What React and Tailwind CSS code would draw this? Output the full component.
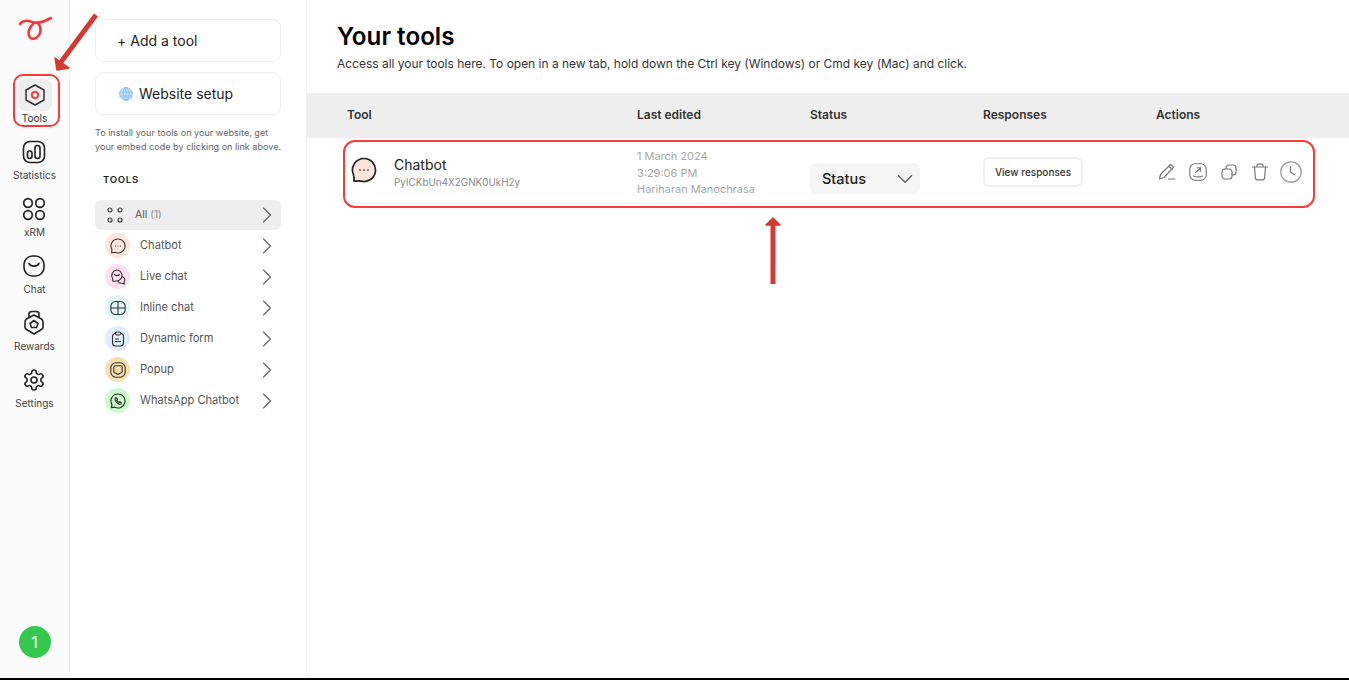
import { ChevronRight, ChevronDown } from 'lucide-react'

const Logo = () => (
  <svg width="36" height="28" viewBox="0 0 36 28" fill="none" stroke="#f5393b" strokeWidth="2.6" strokeLinecap="round">
    <path d="M3 9 C6 5 10 5 15 7 C22 9 28 6 34 3" />
    <path d="M17 8 C12 12 10 19 13 22.5 C17 26 24 21 23.5 14 C23 10 22 8.5 20 8" />
  </svg>
)

const HexIcon = () => (
  <svg width="22" height="24" viewBox="0 0 22 24" fill="none">
    <path d="M11 2 L20 7 V17 L11 22 L2 17 V7 Z" stroke="#333" strokeWidth="1.5" strokeLinejoin="round" />
    <circle cx="11" cy="12" r="3.2" stroke="#f5393b" strokeWidth="1.8" />
  </svg>
)

const StatsIcon = () => (
  <svg width="24" height="24" viewBox="0 0 24 24" fill="none" stroke="#222" strokeWidth="1.6">
    <rect x="1.5" y="1.5" width="21" height="21" rx="6.5" />
    <rect x="5.5" y="11" width="4.5" height="7.5" rx="2.2" />
    <rect x="13" y="5.5" width="5" height="13" rx="2.5" />
  </svg>
)

const GridIcon = () => (
  <svg width="24" height="24" viewBox="0 0 24 24" fill="none" stroke="#222" strokeWidth="1.7">
    <circle cx="6" cy="6" r="4.3" />
    <circle cx="18" cy="6" r="4.3" />
    <circle cx="6" cy="18" r="4.3" />
    <circle cx="18" cy="18" r="4.3" />
  </svg>
)

const ChatIcon = () => (
  <svg width="24" height="24" viewBox="0 0 24 24" fill="none" stroke="#222" strokeWidth="1.6" strokeLinecap="round">
    <rect x="2" y="2" width="20" height="20" rx="8.5" />
    <path d="M7 9.5 C9 13 15 13 17 9.5" />
  </svg>
)

const RewardsIcon = () => (
  <svg width="22" height="26" viewBox="0 0 22 26" fill="none" stroke="#222" strokeWidth="1.6" strokeLinejoin="round">
    <path d="M6 7 V4 C6 2 7.5 1.5 9 1.5 H13 C14.5 1.5 16 2 16 4 V7" />
    <path d="M11 5 L18.5 9 C20 10 20 11 20 12.5 V17 C20 18 19.5 19 18.5 19.5 L11 24 L3.5 19.5 C2.5 19 2 18 2 17 V12.5 C2 11 2 10 3.5 9 Z" />
    <path d="M11 10.5 L15 13.5 L13.5 17.5 H8.5 L7 13.5 Z" />
  </svg>
)

const GearIcon = () => (
  <svg width="24" height="24" viewBox="0 0 24 24" fill="none" stroke="#222" strokeWidth="1.6" strokeLinecap="round" strokeLinejoin="round">
    <path d="M12.22 2h-.44a2 2 0 0 0-2 2v.18a2 2 0 0 1-1 1.73l-.43.25a2 2 0 0 1-2 0l-.15-.08a2 2 0 0 0-2.73.73l-.22.38a2 2 0 0 0 .73 2.73l.15.1a2 2 0 0 1 1 1.72v.51a2 2 0 0 1-1 1.74l-.15.09a2 2 0 0 0-.73 2.73l.22.38a2 2 0 0 0 2.73.73l.15-.08a2 2 0 0 1 2 0l.43.25a2 2 0 0 1 1 1.73V20a2 2 0 0 0 2 2h.44a2 2 0 0 0 2-2v-.18a2 2 0 0 1 1-1.73l.43-.25a2 2 0 0 1 2 0l.15.08a2 2 0 0 0 2.73-.73l.22-.39a2 2 0 0 0-.73-2.73l-.15-.08a2 2 0 0 1-1-1.74v-.5a2 2 0 0 1 1-1.74l.15-.09a2 2 0 0 0 .73-2.73l-.22-.38a2 2 0 0 0-2.73-.73l-.15.08a2 2 0 0 1-2 0l-.43-.25a2 2 0 0 1-1-1.73V4a2 2 0 0 0-2-2z" />
    <circle cx="12" cy="12" r="3" />
  </svg>
)

const railItems = [
  { label: 'Statistics', icon: <StatsIcon /> },
  { label: 'xRM', icon: <GridIcon /> },
  { label: 'Chat', icon: <ChatIcon /> },
  { label: 'Rewards', icon: <RewardsIcon /> },
  { label: 'Settings', icon: <GearIcon /> },
]

const BubbleIcon = () => (
  <svg width="16" height="16" viewBox="0 0 16 16" fill="none" stroke="#333" strokeWidth="1.1" strokeLinecap="round">
    <path d="M8 1 a7 7 0 1 1 -3 13.3 L1.6 14.8 L1.9 11.4 A7 7 0 0 1 8 1 Z" strokeLinejoin="round" />
    <path d="M5.5 8 h.01 M8 8 h.01 M10.5 8 h.01" />
  </svg>
)

const LiveIcon = () => (
  <svg width="16" height="16" viewBox="0 0 16 16" fill="none" stroke="#333" strokeWidth="1.1" strokeLinejoin="round">
    <path d="M6.5 1 a5.5 5.5 0 0 1 0 11 L3 12.5 L2.6 9.5 A5.5 5.5 0 0 1 6.5 1 Z" />
    <path d="M4.5 5.5 C6 7 8 7 9.5 5.5" strokeLinecap="round" />
    <path d="M12 7.5 C15 8.5 15.5 11 14 13 L14.2 15 L12 14.2 C10 14.6 8.5 13.8 7.6 12" />
  </svg>
)

const InlineIcon = () => (
  <svg width="16" height="16" viewBox="0 0 16 16" fill="none" stroke="#333" strokeWidth="1.1">
    <rect x="0.8" y="1.5" width="14.4" height="13" rx="5" />
    <path d="M8 1.5 V14.5 M0.8 8 H15.2" />
  </svg>
)

const FormIcon = () => (
  <svg width="16" height="16" viewBox="0 0 16 16" fill="none" stroke="#333" strokeWidth="1.1" strokeLinecap="round">
    <rect x="2.5" y="2.5" width="11" height="12.5" rx="3" />
    <rect x="5.5" y="1" width="5" height="3" rx="1.2" fill="#e0ecff" />
    <path d="M5.5 8 h3 M5.5 10.5 h5" />
  </svg>
)

const PopupIcon = () => (
  <svg width="16" height="16" viewBox="0 0 16 16" fill="none" stroke="#333" strokeWidth="1.1" strokeLinejoin="round">
    <rect x="0.8" y="0.8" width="14.4" height="14.4" rx="5" />
    <path d="M5.5 3.8 H10.5 C11.5 3.8 12.2 4.5 12.2 5.5 V9.5 C12.2 10.5 11.5 11 10.5 11 L8 12.5 L5.5 11 C4.5 11 3.8 10.5 3.8 9.5 V5.5 C3.8 4.5 4.5 3.8 5.5 3.8 Z" />
  </svg>
)

const WhatsappIcon = () => (
  <svg width="16" height="16" viewBox="0 0 16 16" fill="none" stroke="#222" strokeWidth="1.1" strokeLinejoin="round">
    <path d="M8 1 a7 7 0 1 1 -3.4 13.1 L1.4 14.8 L2 11.6 A7 7 0 0 1 8 1 Z" />
    <path d="M5.6 4.9 L6.6 4.8 L7.4 6.4 L6.7 7.3 C7.2 8.3 8 9.1 9 9.5 L9.8 8.7 L11.3 9.6 L11.1 10.7 C10.7 11.3 9.8 11.4 8.8 11 C6.9 10.3 5.7 9 5.1 7.2 C4.8 6.2 5 5.3 5.6 4.9 Z" />
  </svg>
)

const AllIcon = () => (
  <svg width="16" height="16" viewBox="0 0 16 16" fill="none" stroke="#333" strokeWidth="1.2">
    <circle cx="3" cy="3" r="2" />
    <circle cx="13" cy="3" r="2" />
    <circle cx="3" cy="13" r="2" />
    <circle cx="13" cy="13" r="2" />
  </svg>
)

const tools = [
  { name: 'Chatbot', bg: 'bg-[#ffe6dc]', icon: <BubbleIcon /> },
  { name: 'Live chat', bg: 'bg-[#ffdff0]', icon: <LiveIcon /> },
  { name: 'Inline chat', bg: 'bg-[#e0f5f7]', icon: <InlineIcon /> },
  { name: 'Dynamic form', bg: 'bg-[#e0ecff]', icon: <FormIcon /> },
  { name: 'Popup', bg: 'bg-[#f8dfb0]', icon: <PopupIcon /> },
  { name: 'WhatsApp Chatbot', bg: 'bg-[#ccfccc]', icon: <WhatsappIcon /> },
]

const Globe = () => (
  <svg width="14" height="14" viewBox="0 0 14 14" fill="#c5e2fb" stroke="#7dbaf0" strokeWidth="0.8">
    <circle cx="7" cy="7" r="6.4" />
    <ellipse cx="7" cy="7" rx="3" ry="6.4" fill="none" />
    <path d="M0.8 5 H13.2 M0.8 9 H13.2 M7 0.6 V13.4" fill="none" />
  </svg>
)

const actionIcons = [
  <svg key="edit" width="20" height="20" viewBox="0 0 20 20" fill="none" stroke="#777" strokeWidth="1.2" strokeLinejoin="round" strokeLinecap="round">
    <path d="M13.5 2.5 L16.5 5 L7 15.5 L2.5 17 L3.5 12.5 Z" />
    <path d="M12 4.5 L15 7 M11.5 17 H18" />
  </svg>,
  <svg key="open" width="18" height="18" viewBox="0 0 18 18" fill="none" stroke="#777" strokeWidth="1.1" strokeLinecap="round">
    <rect x="0.8" y="0.8" width="16.4" height="16.4" rx="5" />
    <path d="M6.5 9.5 L11.5 4.8 M8 4.8 H11.5 V8.3 M4.5 13 C7 14 11 14 13.5 13" strokeLinejoin="round" />
  </svg>,
  <svg key="copy" width="16" height="16" viewBox="0 0 16 16" fill="none" stroke="#777" strokeWidth="1.2">
    <rect x="5" y="1" width="10" height="10" rx="3" />
    <rect x="1" y="5" width="10" height="10" rx="3" fill="#fff" />
  </svg>,
  <svg key="trash" width="18" height="18" viewBox="0 0 18 18" fill="none" stroke="#777" strokeWidth="1.2" strokeLinecap="round" strokeLinejoin="round">
    <path d="M1.5 4 H16.5 M6 4 V2.5 C6 1.7 6.5 1.2 7.2 1.2 H10.8 C11.5 1.2 12 1.7 12 2.5 V4" />
    <path d="M3.5 4 L4.3 14.5 C4.4 16 5.2 16.8 6.5 16.8 H11.5 C12.8 16.8 13.6 16 13.7 14.5 L14.5 4" />
  </svg>,
  <svg key="clock" width="22" height="22" viewBox="0 0 22 22" fill="none" stroke="#999" strokeWidth="1.2" strokeLinecap="round" strokeLinejoin="round">
    <circle cx="11" cy="11" r="10.2" />
    <path d="M10.5 5.5 V11 L14.5 13.5" stroke="#777" />
  </svg>,
]

const columns = ['Last edited', 'Status', 'Responses', 'Actions']

export default function App() {
  return (
    <div className="relative h-[680px] overflow-hidden bg-white font-['Inter',sans-serif]">
      <div className="flex h-[678px]">
        {/* icon rail */}
        <aside className="w-[70px] shrink-0 border-r border-[#f0f0f0] bg-[#fbfbfb] flex flex-col items-center">
          <div className="mt-[15px] h-[28px]"><Logo /></div>
          <div className="mt-[36px] w-[34px] h-[32px] rounded-lg bg-[#eeeeee] flex items-center justify-center"><HexIcon /></div>
          <div className="text-[10px] leading-[14px] text-[#333]">Tools</div>
          <div className="flex flex-col mt-[13px] gap-[13px] items-center">
            {railItems.map(item => (
              <div key={item.label} className="flex flex-col items-center">
                <div className="h-[30px] pb-[2px] flex items-center justify-center">{item.icon}</div>
                <div className="text-[10px] leading-[14px] text-[#444]">{item.label}</div>
              </div>
            ))}
          </div>
          <div className="mt-auto mb-[20px] w-8 h-8 rounded-full bg-[#34c84f] text-white text-base flex items-center justify-center">1</div>
        </aside>

        {/* tools column */}
        <aside className="w-[237px] shrink-0 border-r border-[#f0f0f0] pl-[25px] pr-[25px] pt-[19px]">
          <div className="h-[43px] rounded-lg border border-[#eeeeee] flex items-center pl-[21px] text-[14px] text-[#222]">
            <span className="mr-[4px]">+</span>Add a tool
          </div>
          <div className="mt-[10px] h-[43px] rounded-lg border border-[#eeeeee] flex items-center pl-[23px] text-[14px] text-[#222] gap-[6px]">
            <Globe />Website setup
          </div>
          <p className="mt-[11px] text-[9.1px] leading-[14px] text-[#666] whitespace-nowrap">
            To install your tools on your website, get<br />your embed code by clicking on link above.
          </p>
          <div className="mt-[20px] pl-[8px] text-[9.5px] leading-[12px] font-semibold tracking-[0.08em] text-[#222]">TOOLS</div>
          <div className="mt-[14px] h-[30px] rounded-md bg-[#eeeeee] flex items-center pl-[12px]">
            <AllIcon />
            <span className="ml-[12px] text-[10.5px] text-[#555]">All <span className="text-[10px] text-[#888]">(1)</span></span>
            <ChevronRight className="ml-auto text-[#666]" size={28} strokeWidth={1} />
          </div>
          <ul className="flex flex-col gap-[6px] mt-[3px]">
            {tools.map(tool => (
              <li key={tool.name} className="h-[25px] flex items-center pl-[10px]">
                <span className={`w-[25px] h-[25px] rounded-full flex items-center justify-center ${tool.bg}`}>{tool.icon}</span>
                <span className="ml-[10px] text-[11.1px] text-[#555]">{tool.name}</span>
                <ChevronRight className="ml-auto text-[#666]" size={28} strokeWidth={1} />
              </li>
            ))}
          </ul>
        </aside>

        {/* main */}
        <main className="flex-1 min-w-0 pt-[24px]">
          <h1 className="pl-[30px] text-[24.2px] leading-[26px] font-semibold text-black">Your tools</h1>
          <p className="pl-[30px] mt-[6px] text-[11.97px] leading-[16px] text-[#333]">
            Access all your tools here. To open in a new tab, hold down the Ctrl key (Windows) or Cmd key (Mac) and click.
          </p>
          <div className="mt-[21px] h-[45px] pb-[2px] bg-[#eeeeee] flex items-center pl-[40px] text-[12px] font-semibold text-[#333]">
            <div className="w-[290px]">Tool</div>
            {columns.map(col => (
              <div key={col} className="w-[173px]">{col}</div>
            ))}
          </div>
          <div className="h-[66px] mt-[1px] flex items-center pl-[44px]">
            <div className="w-[286px] flex items-center">
              <svg className="mb-[4px]" width="26" height="26" viewBox="0 0 26 26" fill="#ffe6dc" stroke="#222" strokeWidth="1.7" strokeLinecap="round" strokeLinejoin="round">
                <path d="M13 1.5 a11.5 11.5 0 1 1 -3 22.6 C7 23.5 5 24.5 2.8 24 C3.5 22 3 20 2.4 17.5 A11.5 11.5 0 0 1 13 1.5 Z" />
                <path d="M9 13 h.01 M13 13 h.01 M17 13 h.01" />
              </svg>
              <div className="ml-[17px] mt-[1px]">
                <div className="text-[14px] leading-[18px] text-[#222]">Chatbot</div>
                <div className="text-[9.9px] leading-[14px] mt-[1px] text-[#8a8a8a]">PyICKbUn4X2GNK0UkH2y</div>
              </div>
            </div>
            <div className="w-[173px] mt-[2px] text-[10.98px] leading-[16.5px] text-[#a8a8a8]">
              <div>1 March 2024</div>
              <div>3:29:06 PM</div>
              <div>Hariharan Manochrasa</div>
            </div>
            <div className="w-[173px] mt-[13px]">
              <div className="w-[110px] h-[31px] rounded-md bg-[#f5f5f5] flex items-center justify-between pl-[12px] pr-[2px] text-[14.5px] font-medium text-[#222]">
                Status
                <ChevronDown size={26} className="text-[#666]" strokeWidth={1.4} />
              </div>
            </div>
            <div className="w-[173px]">
              <button className="w-[100px] h-[30px] rounded-md border-2 border-[#f0f0f0] bg-white text-[10px] font-medium text-[#333]">View responses</button>
            </div>
            <div className="flex items-center ml-[-5px]">
              {actionIcons.map(icon => (
                <div key={icon.key} className="w-[31px] flex justify-center">{icon}</div>
              ))}
            </div>
          </div>
        </main>
      </div>

      <div className="h-[2px] bg-black" />

      {/* annotations drawn over the page */}
      <div className="absolute left-[13px] top-[74px] w-[47px] h-[53px] rounded-[10px] border-2 border-[#f73b3b]" />
      <div className="absolute left-[343px] top-[140px] w-[972px] h-[68px] rounded-[12px] border-2 border-[#f73b3b]" />
      <svg className="absolute left-[50px] top-[10px]" width="52" height="64" viewBox="0 0 52 64" fill="none">
        <path d="M46 5 L11 52" stroke="#d43a30" strokeWidth="5" />
        <path d="M5 48 L7 60 L19 58 Z" fill="#d43a30" stroke="#d43a30" strokeWidth="1.5" strokeLinejoin="round" />
      </svg>
      <svg className="absolute left-[762px] top-[215px]" width="22" height="72" viewBox="0 0 22 72" fill="none">
        <path d="M11 6 V69" stroke="#d43a30" strokeWidth="5" />
        <path d="M4 10 L11 3 L18 10 Z" fill="#d43a30" stroke="#d43a30" strokeWidth="1.5" strokeLinejoin="round" />
      </svg>
    </div>
  )
}
